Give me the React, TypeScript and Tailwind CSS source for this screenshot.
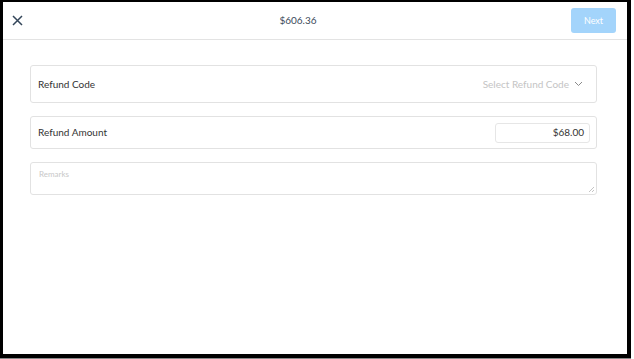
export default function App() {
  return (
    <div className="bg-white" style={{ fontFamily: "Lato, 'Open Sans', sans-serif" }}>
      <div className="w-[631px] h-[358px] border-black border-l-[3px] border-t-2 border-r-4 border-b-4 flex flex-col">
        {/* header */}
        <div className="h-[38px] flex items-center border-b border-[#e3e3e3]">
          <button className="w-[28px] h-full flex items-center justify-center text-[#34465a]">
            <svg width="11" height="11" viewBox="0 0 11 11" fill="none" stroke="currentColor" strokeWidth="1.5">
              <path d="M1 1l9 9M10 1l-9 9" />
            </svg>
          </button>
          <div className="flex-1 mr-[6px] text-center text-[10px] text-[#3b4a5a]">$606.36</div>
          <button className="mr-[11px] w-[45px] h-[25px] rounded-[3px] bg-[#a3d4fb] text-white text-[9px]">Next</button>
        </div>

        {/* form */}
        <div className="pl-[27px] pr-[30px] pt-[25px] flex flex-col gap-[13px]">
          <div className="h-[38px] border border-[#e2e2e2] rounded-[3px] flex items-center justify-between pl-[7px] pr-[13px]">
            <span className="text-[10px] text-[#333]">Refund Code</span>
            <span className="flex items-center gap-[5px] text-[10px] text-[#c4c4c4]">
              Select Refund Code
              <svg width="9" height="6" viewBox="0 0 9 6" fill="none" stroke="#8a8a8a" strokeWidth="1">
                <path d="M1 1l3.5 3.5L8 1" />
              </svg>
            </span>
          </div>

          <div className="h-[33px] border border-[#e2e2e2] rounded-[3px] flex items-center justify-between pl-[7px] pr-[6px]">
            <span className="text-[10px] text-[#333]">Refund Amount</span>
            <div className="w-[95px] h-[20px] border border-[#e6e6e6] rounded-[3px] flex items-center justify-end pr-[5px] text-[10px] text-[#333]">
              $68.00
            </div>
          </div>

          <div className="relative h-[33px]">
            <textarea
              placeholder="Remarks"
              className="w-full h-full resize-none border border-[#e2e2e2] rounded-[3px] px-[8px] pt-[5px] text-[8px] text-[#333] placeholder:text-[#c8c8c8] outline-none"
            />
            <svg className="absolute right-[3px] bottom-[3px]" width="6" height="6" viewBox="0 0 6 6" stroke="#b5b5b5" strokeWidth="0.8">
              <path d="M6 1L1 6M6 4L4 6" />
            </svg>
          </div>
        </div>
      </div>
      <div className="w-[631px] h-px bg-[#888]" />
    </div>
  );
}
